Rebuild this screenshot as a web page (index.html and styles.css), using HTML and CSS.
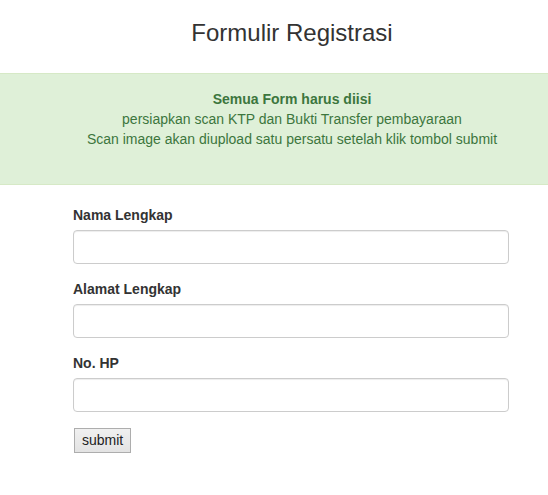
FILE: index.html
```html
<!DOCTYPE html>
<html lang="en">
<head>
  <meta charset="UTF-8" />
  <meta name="viewport" content="width=device-width, initial-scale=1.0"/>
  <title>Formulir Registrasi</title>
  <link rel="stylesheet" href="styles.css">
</head>
<body>

  <h3 class="title">Formulir Registrasi</h3>

  <div class="alert">
    <strong>Semua Form harus diisi</strong><br>
    persiapkan scan KTP dan Bukti Transfer pembayaraan<br>
    Scan image akan diupload satu persatu setelah klik tombol submit<br>
    &nbsp;
  </div>

  <form class="form" action="#">
    <div class="form-group">
      <label for="nama">Nama Lengkap</label>
      <input type="text" id="nama" class="form-control">
    </div>
    <div class="form-group">
      <label for="alamat">Alamat Lengkap</label>
      <input type="text" id="alamat" class="form-control">
    </div>
    <div class="form-group">
      <label for="hp">No. HP</label>
      <input type="text" id="hp" class="form-control">
    </div>
    <button type="submit" class="btn-submit">submit</button>
  </form>

</body>
</html>
```

FILE: styles.css
```css
body {
  font-family: "Liberation Sans", Arial, Helvetica, sans-serif;
  font-size: 14px;
  line-height: 20px;
  color: #333;
  background: #fff;
  margin: 0;
  padding: 0;
}

.title {
  font-size: 24px;
  font-weight: normal;
  line-height: 26px;
  text-align: center;
  margin: 20px 0 27px;
  padding-left: 36px;
}

.alert {
  background: #dff0d8;
  color: #3c763d;
  border-top: 1px solid #d6e9c6;
  border-bottom: 1px solid #d6e9c6;
  padding: 15px 0 15px 36px;
  text-align: center;
  margin-bottom: 20px;
}

.form {
  width: 436px;
  margin-left: 73px;
}

.form-group {
  margin-bottom: 15px;
}

label {
  display: block;
  font-weight: bold;
  margin-bottom: 5px;
}

.form-control {
  display: block;
  box-sizing: border-box;
  width: 100%;
  height: 34px;
  padding: 6px 12px;
  font-size: 14px;
  border: 1px solid #ccc;
  border-radius: 4px;
  box-shadow: inset 0 1px 1px rgba(0, 0, 0, 0.075);
  background: #fff;
}

.btn-submit {
  font-family: "Liberation Sans", Arial, sans-serif;
  font-size: 14px;
  color: #222;
  margin: 1px 0 0 1px;
  padding: 2px 7px 3px;
  height: 25px;
  border: 1px solid #adadad;
  border-radius: 0;
  background: linear-gradient(#f0f0f0, #e3e3e3);
}
```
